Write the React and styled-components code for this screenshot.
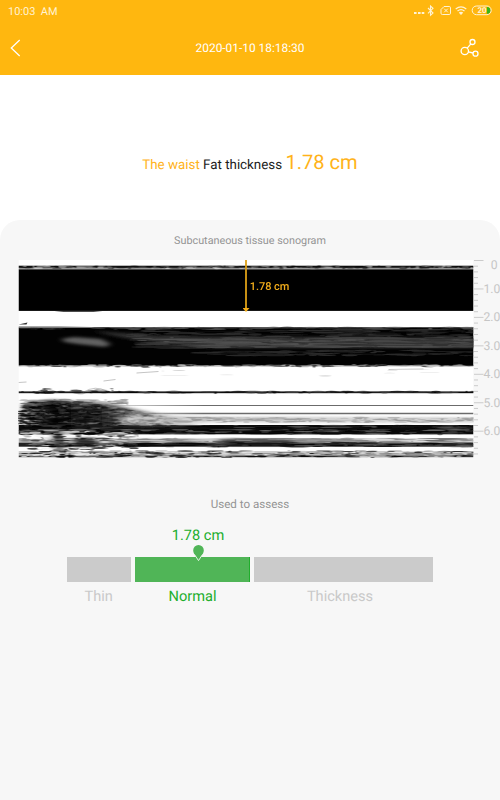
import React from "react";
import styled, { createGlobalStyle } from "styled-components";

const GlobalStyle = createGlobalStyle`
  * {
    box-sizing: border-box;
  }

  body {
    margin: 0;
    background: #fff;
    font-family: Roboto, "Liberation Sans", sans-serif;
    text-rendering: geometricPrecision;
    overflow: hidden;
  }

  svg {
    display: block;
  }
`;

const Screen = styled.div`
  width: 500px;
  height: 800px;
  display: flex;
  flex-direction: column;
  overflow: hidden;
`;

const Top = styled.header`
  height: 75px;
  background: #ffb70f;
  color: #fff;
`;

const StatusBar = styled.div`
  height: 22px;
  padding: 0 8px;
  display: flex;
  align-items: center;
  justify-content: space-between;
  font-size: 11px;
  color: #fff3d5;
  white-space: pre;
`;

const TitleBar = styled.div`
  height: 52px;
  padding: 0 20px 0 9px;
  display: grid;
  grid-template-columns: 60px 1fr 49px;
  align-items: center;
`;

const Title = styled.div`
  font-size: 11.9px;
  line-height: 14px;
  text-align: center;
`;

const ShareButton = styled.div`
  display: flex;
  justify-content: flex-end;
`;

const Summary = styled.section`
  height: 145px;
  padding-top: 73px;
  text-align: center;
  font-size: 13.35px;
  line-height: 28px;
  color: #1c1c1c;
  white-space: nowrap;
`;

const Accent = styled.span`
  color: #ffb31a;
  font-size: ${(props) => props.$size || "inherit"};
`;

const Panel = styled.section`
  flex: 1;
  background: #f7f7f7;
  border-radius: 20px 20px 0 0;
`;

const Caption = styled.h2`
  margin: 0;
  height: ${(props) => props.$height};
  padding-top: ${(props) => props.$top};
  font-size: ${(props) => props.$size};
  font-weight: 400;
  line-height: 14px;
  text-align: center;
  color: #949494;
`;

const Scan = styled.div`
  display: flex;
  padding-left: 18px;
  height: 198px;
`;

const Assess = styled.div`
  width: 367px;
  margin: 0 auto;
`;

const Reading = styled.div`
  width: 263px;
  padding-top: 15px;
  text-align: center;
  font-size: 14.6px;
  line-height: 18px;
  color: #20ae2c;
`;

const Marker = styled.svg`
  position: relative;
  z-index: 1;
  margin: 0 0 -5px 125px;
`;

const Levels = styled.div`
  display: grid;
  grid-template-columns: 64.5px 115px 179px;
  column-gap: 4px;
`;

const Level = styled.div`
  &::before {
    content: "";
    display: block;
    height: 25px;
    margin-bottom: 5px;
    background: ${(props) => (props.$active ? "#50b557" : "#cbcbcb")};
    border-right: ${(props) => (props.$active ? "1px solid #20ae2c" : "none")};
  }
`;

const LevelName = styled.div`
  padding-right: ${(props) => props.$shift || 0};
  font-size: 14.6px;
  line-height: 18px;
  text-align: center;
  color: ${(props) => (props.$active ? "#20ae2c" : "#c9c9c9")};
`;

const StatusIcons = () => (
  <svg width="80" height="16" viewBox="412 3 80 16" fill="none" stroke="#fff3d5">
    <g fill="#fff3d5" stroke="none">
      <rect x="414" y="12" width="2.6" height="2" />
      <rect x="418" y="12" width="2.6" height="2" />
      <rect x="421.7" y="12" width="2.6" height="2" />
    </g>
    <path d="M428 8l5 5-2.5 2.3V6l2.5 2.3-5 5" strokeWidth="1.1" />
    <path d="M444 6.5h5.2q1.3 0 1.3 1.3v5.4q0 1.3-1.3 1.3h-6.9q-1.3 0-1.3-1.3V9.5zM444.2 8.7l3.6 3.6m0-3.6l-3.6 3.6" />
    <path d="M455.7 9q5.3-4.4 10.6 0M457.5 11q3.5-2.9 7 0M459.2 13q1.8-1.4 3.6 0" strokeWidth="1.2" />
    <path d="M461 12.4l1.5 1-1.5 1.7-1.5-1.7z" fill="#fff3d5" stroke="none" />
    <path d="M486.8 7q3.7 0 3.7 3.4t-3.7 3.4z" fill="#35b51c" stroke="none" />
    <rect x="472.2" y="6" width="19" height="8.7" rx="4.3" />
    <text x="477.4" y="13.3" fill="#fff3d5" stroke="none" fontSize="8" fontWeight="700">20</text>
  </svg>
);

const BackIcon = () => (
  <svg width="13" height="18" viewBox="9 39 13 18" fill="none" stroke="#fff" strokeWidth="1.3">
    <path d="M19.7 40l-8.4 8 8.4 8" />
  </svg>
);

const ShareIcon = () => (
  <svg width="20" height="20" viewBox="460 38 20 20" fill="none" stroke="#fff" strokeWidth="1.3">
    <circle cx="464.8" cy="51" r="3.7" />
    <circle cx="472.5" cy="42" r="2.5" />
    <circle cx="475.5" cy="53.7" r="2.5" />
    <path d="M467.2 48.2l3.7-4.3M468.4 51.8l4.6 1.2" />
  </svg>
);

// small seeded generator, so the scan looks the same on every render
const random = (seed) => () => {
  seed = (seed * 16807) % 2147483647;
  return (seed - 1) / 2147483646;
};

// x, y, width, height, fill
const layers = [
  [0, 5.7, 455, 2.2, "#151515"],
  [0, 7.9, 455, 1.7, "#999"],
  [0, 9.4, 455, 41.5, "#000"],
  [0, 67.3, 455, 37.7, "#020202"],
  [0, 105, 455, 1.3, "#666"],
  [0, 131.4, 455, 1.8, "#1c1c1c"],
  [0, 165, 455, 9.3, "#0c0c0c"],
  [0, 178.4, 455, 3.5, "#aaa"],
  [0, 182.5, 455, 4.2, "#222"],
  [0, 191.5, 455, 1, "#999"],
  [0, 193.4, 455, 1, "#555"],
  [0, 195.4, 455, 2, "#333"],
];

// [x, x end, y, y end, count, longest streak, thickest, colours, opacity]
const grain = [
  [0, 455, 5.7, 8.7, 170, 8, 0.7, ["#fff", "#888", "#000"], 0.5],
  [0, 455, 67, 69.5, 90, 28, 0.7, ["#777", "#333"], 0.6],
  [90, 455, 69, 77, 90, 45, 0.6, ["#444", "#222", "#555"], 0.5],
  [110, 455, 77, 88, 240, 60, 0.6, ["#555", "#333", "#666"], 0.6],
  [170, 455, 90, 96, 80, 35, 0.6, ["#333", "#444"], 0.6],
  [0, 455, 104.4, 107, 150, 14, 0.6, ["#000", "#999", "#eee"], 0.6],
  [100, 455, 109, 119, 9, 40, 0.3, ["#bbb", "#ddd"], 0.6],
  [0, 455, 131, 133.3, 90, 16, 0.6, ["#000", "#444"], 0.7],
  [0, 95, 128, 134, 26, 12, 0.8, ["#111", "#888"], 0.7],
  [0, 110, 139, 145, 60, 24, 0.5, ["#555", "#999", "#222"], 0.5],
  [110, 455, 157, 162.5, 260, 18, 0.5, ["#777", "#ddd", "#aaa"], 0.55],
  [0, 455, 165, 168.5, 60, 30, 0.5, ["#222", "#000", "#777"], 0.6],
  [0, 455, 169, 174.5, 190, 26, 0.4, ["#aaa", "#555", "#000"], 0.55],
  [0, 455, 177.7, 182, 170, 50, 0.4, ["#777", "#555", "#eee"], 0.7],
  [0, 120, 170, 196, 230, 15, 0.8, ["#000", "#fff", "#eee", "#777"], 0.7],
  [0, 455, 182, 187, 120, 36, 0.4, ["#000", "#666"], 0.75],
  [0, 455, 190.5, 197.5, 330, 16, 0.5, ["#000", "#888", "#eee"], 0.75],
];

const Streaks = () => {
  const next = random(178);
  return grain.map(([x1, x2, y1, y2, count, long, thick, colors, opacity], band) => (
    <g key={band} opacity={opacity}>
      {Array.from({ length: count }, (_, i) => {
        const x = x1 + next() * (x2 - x1);
        const y = y1 + next() * (y2 - y1 - thick);
        const w = Math.min(x2 - x, 2 + next() * long);
        const h = 0.35 + next() * thick;
        const fill = colors[Math.floor(next() * colors.length)];
        return <ellipse key={i} cx={x + w / 2} cy={y + h / 2} rx={w / 2} ry={h} fill={fill} />;
      })}
    </g>
  ));
};

// the dark patch on the left, thinning out to the right
const DarkTissue = () => {
  const next = random(51);
  return Array.from({ length: 560 }, (_, i) => {
    const x = Math.pow(next(), 1.2) * 150;
    const start = 142 + Math.max(0, x - 60) * 0.15 + Math.max(0, 12 - x) * 0.5;
    const y = start + next() * (166 - start);
    const w = 2 + next() * 11;
    const light = next() < 0.04 + x / 260;
    return (
      <ellipse
        key={i}
        cx={x + 2}
        cy={y}
        rx={w / 2}
        ry={0.3 + next() * 0.6}
        fill={light ? "#d2d2d2" : "#080808"}
        opacity={light ? 0.25 : 0.7 - x / 250}
      />
    );
  });
};

const Sonogram = () => (
  <svg width="456" height="198" viewBox="-0.5 0 456 198">
    <defs>
      <clipPath id="scan">
        <rect width="455" height="197.5" />
      </clipPath>
      <filter id="soft" x="-10%" y="-30%" width="120%" height="160%">
        <feGaussianBlur stdDeviation="3 1.5" />
      </filter>
      <filter id="fine">
        <feGaussianBlur stdDeviation="0.5 0.2" />
      </filter>
      <linearGradient id="tissue">
        <stop offset="0" stopColor="#000" stopOpacity="0.4" />
        <stop offset="0.15" stopColor="#000" stopOpacity="0.95" />
        <stop offset="0.4" stopColor="#111" stopOpacity="0.9" />
        <stop offset="0.65" stopColor="#555" stopOpacity="0.7" />
        <stop offset="1" stopColor="#999" stopOpacity="0" />
      </linearGradient>
      <linearGradient id="fade">
        <stop offset="0" stopColor="#6b6b6b" stopOpacity="0" />
        <stop offset="0.3" stopColor="#6b6b6b" />
      </linearGradient>
    </defs>
    <g clipPath="url(#scan)">
      <rect width="455" height="198" fill="#fff" />
      {layers.map(([x, y, width, height, fill]) => (
        <rect key={y} x={x} y={y} width={width} height={height} fill={fill} />
      ))}
      <path d="M30 50.5h60l-15 1.2H45z" fill="#111" />
      <path d="M0 64.5l9-2-1 2z" fill="#333" />
      <path d="M0 66h40l50 1.5H0z" fill="#aaa" />
      <g fill="none" stroke="#888" strokeWidth="0.5">
        <path d="M65 132q12-7 23-1M0 122.5l8-.5M85 121l12-1.5M118 113l22-1.5M370 109.5l35-.5" />
      </g>
      <g filter="url(#soft)">
        <path d="M43 79l12-2 28 2 9 5-5 3-28-3-13-2z" fill="#626262" />
        <path d="M75 71l70 5 315 2v10H200q-80-5-125-17z" fill="#303030" />
        <path d="M3 144l30-4 57 4 50 10 60 8-40 5H20L4 155z" fill="url(#tissue)" />
        <path d="M110 155l90 2 260 1v4H100z" fill="#c4c4c4" />
      </g>
      <path d="M70 145h385v1H70zM90 152.8h365v1.4H90z" fill="url(#fade)" />
      <g filter="url(#fine)">
        <DarkTissue />
        <Streaks />
      </g>
      <g filter="url(#soft)" opacity="0.7">
        <path d="M34 172h9v17h-8zM58 178h20v9H55zM198 180h75v5H210z" fill="#111" />
      </g>
    </g>
    <path d="M227.5 0v48.5" stroke="#dda017" strokeWidth="1.8" />
    <path d="M224 48h7l-3.5 3.9z" fill="#f4ad17" />
    <text x="231.3" y="29.7" fontSize="11" fontWeight="500" textLength="39.5" fill="#f3ad1b">1.78 cm</text>
  </svg>
);

const Ruler = () => (
  <svg width="26" height="198" viewBox="474 260 26 198">
    {Array.from({ length: 35 }, (_, i) => (
      <path
        key={i}
        d={`M473 ${260.5 + i * 5.69}h${i % 5 === 0 ? 10.5 : 5}`}
        stroke="#cbcbcb"
      />
    ))}
    <g fill="#c6c6c6" fontSize="12.2">
      <text x="490.7" y="269.3">0</text>
      {[1, 2, 3, 4, 5, 6].map((cm) => (
        <text key={cm} x="483.5" y={264.3 + cm * 28.45}>{cm}.0</text>
      ))}
    </g>
  </svg>
);

const App = () => {
  return (
    <Screen>
      <GlobalStyle />
      <Top>
        <StatusBar>
          <span>10:03  AM</span>
          <StatusIcons />
        </StatusBar>
        <TitleBar>
          <BackIcon />
          <Title>2020-01-10 18:18:30</Title>
          <ShareButton>
            <ShareIcon />
          </ShareButton>
        </TitleBar>
      </Top>
      <Summary>
        <Accent>The waist</Accent> Fat thickness <Accent $size="20.1px">1.78 cm</Accent>
      </Summary>
      <Panel>
        <Caption $height="40px" $top="14px" $size="10.8px">Subcutaneous tissue sonogram</Caption>
        <Scan>
          <Sonogram />
          <Ruler />
        </Scan>
        <Caption $height="53px" $top="38.5px" $size="11.6px">Used to assess</Caption>
        <Assess>
          <Reading>1.78 cm</Reading>
          <Marker width="13" height="18" viewBox="0 0 13 18">
            <path
              d="M6.5 1A5.3 5.3 0 0 0 1.2 6.3C1.2 10 4 12 6.5 16.6 9 12 11.8 10 11.8 6.3A5.3 5.3 0 0 0 6.5 1z"
              fill="#50b557"
            />
            <path d="M2.3 10.3l4.2 6.3 4.2-6.3" fill="none" stroke="#e5f5e5" />
          </Marker>
          <Levels>
            <Level>
              <LevelName>Thin</LevelName>
            </Level>
            <Level $active>
              <LevelName $active>Normal</LevelName>
            </Level>
            <Level>
              <LevelName $shift="7px">Thickness</LevelName>
            </Level>
          </Levels>
        </Assess>
      </Panel>
    </Screen>
  );
};

export default App;
